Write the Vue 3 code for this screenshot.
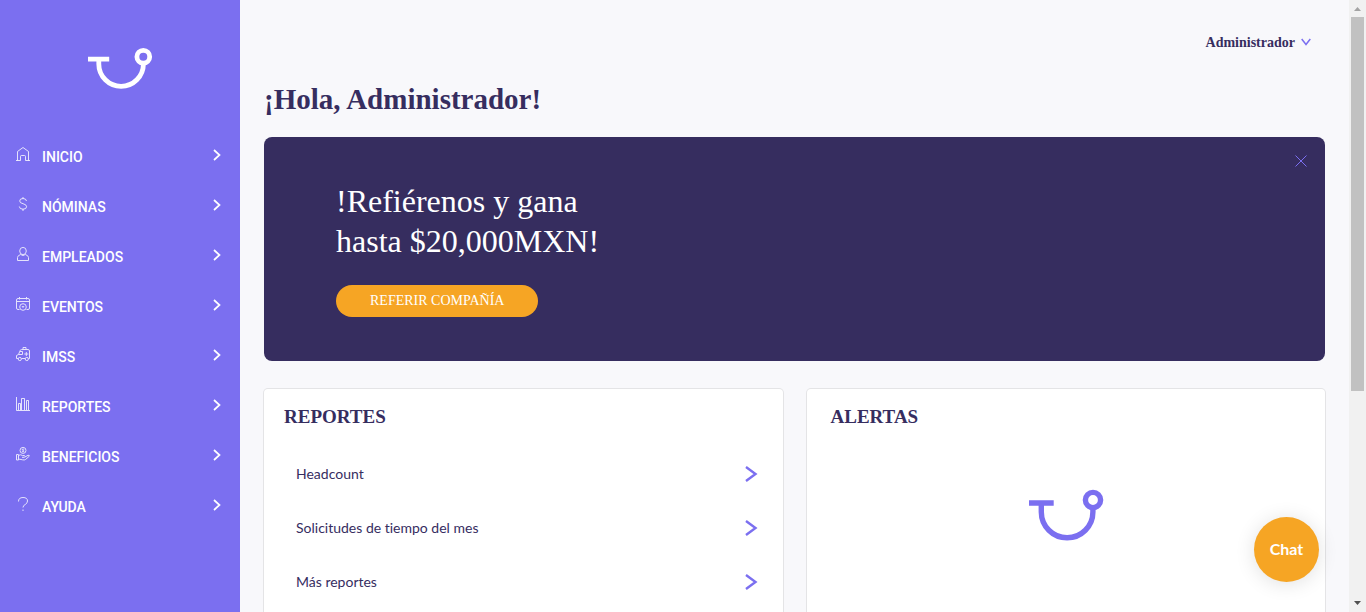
<script setup>
import { ref } from 'vue'

const menu = [
  { id: 'inicio', label: 'INICIO' },
  { id: 'nominas', label: 'NÓMINAS' },
  { id: 'empleados', label: 'EMPLEADOS' },
  { id: 'eventos', label: 'EVENTOS' },
  { id: 'imss', label: 'IMSS' },
  { id: 'reportes', label: 'REPORTES' },
  { id: 'beneficios', label: 'BENEFICIOS' },
  { id: 'ayuda', label: 'AYUDA' },
]

const reports = ['Headcount', 'Solicitudes de tiempo del mes', 'Más reportes']

const bannerOpen = ref(true)
</script>

<template>
  <div class="app">
    <nav class="sidebar" aria-label="Principal">
      <svg class="brand" viewBox="0 0 64 41" aria-hidden="true">
        <path d="M0 11.1H21.2M10.8 11V16A22.3 22.3 0 0 0 55.4 16V15" />
        <circle cx="55.3" cy="8.8" r="6.4" />
      </svg>
      <ul class="menu">
        <li v-for="item in menu" :key="item.id">
          <a class="menu-item" href="#">
            <svg class="menu-icon" viewBox="0 0 14 14" aria-hidden="true">
              <path v-if="item.id === 'inicio'" d="M0 13.5H4.5V9.5Q4.500 8.500 5.500 8.500H8.500Q9.500 8.500 9.500 9.500V13.500H14M1.500 13.500V4.500L7 .5L12.500 4.500V13.500" />
              <path v-else-if="item.id === 'nominas'" d="M7 0V1.500M7 12V14M10.500 4Q10.200 1.500 7 1.500Q3.700 1.500 3.700 4Q3.700 6 7 6.700Q10.600 7.500 10.600 9.700Q10.600 12.200 7 12.200Q3.500 12.200 3.300 9.500" />
              <template v-else-if="item.id === 'empleados'">
                <ellipse cx="7" cy="4" rx="3.3" ry="3.6" />
                <path d="M4.700 7.500Q1.500 8.500 1.500 10.500V13.500H12.500V10.500Q12.500 8.500 9.300 7.500Q7 9.600 4.700 7.500" />
              </template>
              <template v-else-if="item.id === 'eventos'">
                <path d="M3.500 12.500H2Q.5 12.500 .5 11V3Q.5 1.500 2 1.500H12Q13.500 1.500 13.500 3V11Q13.500 12.500 12 12.500H10.500M.5 4.500H13.500M3.500 0V2.500M10.500 0V2.500M6 9L7 10.500L8 9" />
                <circle cx="7" cy="10" r="3.3" />
              </template>
              <template v-else-if="item.id === 'imss'">
                <path d="M2 11.500H.5V8.500L2.500 7.500L4.200 3.500Q4.500 2.500 5.500 2.500H12Q13.500 2.500 13.500 4V11.500H12.500M5.500 11.500H9M2.500 7.500H6.500V4.500H4M7 2.500V.5H10V2.500M10.300 5V9M8.300 7H12.300" />
                <circle cx="3.800" cy="12" r="1.600" />
                <circle cx="10.800" cy="12" r="1.600" />
              </template>
              <path v-else-if="item.id === 'reportes'" d="M.5 0V13.500H14M2.500 13V6.500H4.500V13M5.500 13V1.500H8.500V13M10.500 13V3.500H12.500V13" />
              <template v-else-if="item.id === 'beneficios'">
                <circle cx="7" cy="3.400" r="3" />
                <path d="M8.200 2.500Q7 1.500 6.200 2.400Q6 3.200 7 3.400Q8.200 3.700 7.800 4.500Q7 5.200 5.900 4.300M.5 7.500H2.500V13H.5ZM2.500 8.500Q4.500 7 6.500 8.500H8.500Q9.700 9.300 8.500 10.300H6M9 10L12 8.300Q13.700 8 13.300 9.200L9.500 12.500Q8.500 13.300 6.500 12.800L2.500 12" />
              </template>
              <path v-else d="M2.500 4.500Q2.500 .5 7 .5Q11.500 .5 11.500 4Q11.500 6 9.500 7.300Q7 8.500 7 10.500M7 12.500V14" />
            </svg>
            <span class="menu-label">{{ item.label }}</span>
            <svg class="menu-arrow" viewBox="0 0 8 12" aria-hidden="true">
              <path d="M1 1L6.500 6L1 11" />
            </svg>
          </a>
        </li>
      </ul>
    </nav>

    <main class="content">
      <header class="topbar">
        <button class="account" type="button">
          Administrador
          <svg class="account-arrow" viewBox="0 0 10 8" aria-hidden="true">
            <path d="M.7 1L5 6.500L9.300 1" />
          </svg>
        </button>
      </header>

      <h1>¡Hola, Administrador!</h1>

      <section v-if="bannerOpen" class="banner">
        <p class="banner-text">!Refiérenos y gana<br />hasta $20,000MXN!</p>
        <button class="refer" type="button">REFERIR COMPAÑÍA</button>
        <button class="close" type="button" aria-label="Cerrar" @click="bannerOpen = false">
          <svg viewBox="0 0 12 12" aria-hidden="true"><path d="M.5 .5L11.500 11.500M11.500 .5L.5 11.500" /></svg>
        </button>
      </section>

      <div class="cards">
        <section class="card reports">
          <h2>REPORTES</h2>
          <ul>
            <li v-for="report in reports" :key="report">
              <a class="report" href="#">
                <span>{{ report }}</span>
                <svg class="report-arrow" viewBox="0 0 12 16" aria-hidden="true">
                  <path d="M1 1L10.500 8L1 15" />
                </svg>
              </a>
            </li>
          </ul>
        </section>
        <section class="card alerts">
          <h2>ALERTAS</h2>
          <svg class="alerts-logo" viewBox="0 0 74 52" aria-hidden="true">
            <path d="M0 14H24.700M12.300 14V23A25.800 25.800 0 0 0 63.900 23V19" />
            <circle cx="64" cy="11" r="7.600" />
          </svg>
        </section>
      </div>

      <button class="chat" type="button">Chat</button>
    </main>

    <div class="scrollbar" aria-hidden="true">
      <svg class="scroll-arrow up" viewBox="0 0 17 17"><path d="M5 11L8.500 7L12 11Z" /></svg>
      <div class="track"><div class="thumb"></div></div>
      <svg class="scroll-arrow down" viewBox="0 0 17 17"><path d="M5 6L8.500 10L12 6Z" /></svg>
    </div>
  </div>
</template>

<style>
body {
  margin: 0;
}
</style>

<style scoped>
.app {
  display: flex;
  height: 100vh;
  overflow: hidden;
  background: #f8f8fb;
  color: #362d5f;
  font-family: Lato, 'Liberation Sans', sans-serif;
  font-variant-ligatures: none;
}

button {
  margin: 0;
  padding: 0;
  border: 0;
  background: none;
  color: inherit;
  cursor: pointer;
}

a {
  color: inherit;
  text-decoration: none;
}

ul {
  margin: 0;
  padding: 0;
  list-style: none;
}

svg {
  display: block;
  flex: none;
  fill: none;
  overflow: visible;
}

.sidebar {
  flex: 0 0 240px;
  background: #7b6ff0;
  color: #fff;
}

.brand {
  width: 64px;
  margin: 48px auto 41px;
  stroke: #fff;
  stroke-width: 4.8;
}

.menu-item {
  display: flex;
  align-items: center;
  height: 50px;
  padding: 0 19px 0 16px;
}

.menu-icon {
  width: 14px;
  height: 14px;
  margin-bottom: 2px;
  stroke: #fff;
  stroke-width: 1;
  opacity: 0.8;
}

.menu-label {
  flex: 1;
  padding: 4px 0 0 12px;
  font-family: Roboto, sans-serif;
  font-size: 14px;
  line-height: 20px;
  font-weight: 500;
}

.menu-arrow {
  width: 8px;
  height: 12px;
  stroke: #fff;
  stroke-width: 1.7;
}

.content {
  position: relative;
  flex: 1;
  min-width: 0;
  padding: 0 24px;
}

.topbar {
  display: flex;
  justify-content: flex-end;
  align-items: center;
  height: 84px;
  padding-right: 14px;
}

.account {
  display: flex;
  align-items: center;
  gap: 6px;
  padding-top: 1px;
  font: bold 14px/20px 'Liberation Serif', serif;
}

.account-arrow {
  width: 10px;
  height: 8px;
  margin-bottom: 2px;
  stroke: #7b6ff0;
  stroke-width: 1.5;
}

h1 {
  margin: 0 0 23px;
  font: bold 29px/30px 'Liberation Serif', serif;
}

.banner {
  position: relative;
  padding: 44px 72px;
  border-radius: 8px;
  background: #362d5f;
  color: #fff;
}

.banner-text {
  margin: 0 0 24px;
  font: 32px/40px 'Liberation Serif', serif;
}

.refer {
  display: block;
  padding: 0 34px;
  border-radius: 16px;
  background: #f6a524;
  color: #fff;
  font: 14px/32px 'Liberation Serif', serif;
}

.close {
  position: absolute;
  top: 18px;
  right: 18px;
}

.close svg {
  width: 12px;
  height: 12px;
  stroke: #7b6ff0;
}

.cards {
  display: grid;
  grid-template-columns: 1fr 1fr;
  gap: 24px;
  margin-top: 28px;
}

.card {
  min-height: 320px;
  padding: 16px 24px;
  border-radius: 4px;
  background: #fff;
  box-shadow: 0 0 0 1px #e4e4e6;
}

.reports {
  padding-left: 20px;
}

h2 {
  margin: 0;
  font: bold 19px/24px 'Liberation Serif', serif;
}

.reports ul {
  margin-top: 18px;
}

.report {
  display: flex;
  align-items: center;
  justify-content: space-between;
  height: 54px;
  padding-left: 12px;
  font-size: 14px;
  line-height: 18px;
}

.report-arrow {
  width: 12px;
  height: 16px;
  margin-right: 2px;
  stroke: #7b6ff0;
  stroke-width: 2.4;
}

.alerts-logo {
  width: 74px;
  height: 52px;
  margin: 60px auto 0;
  stroke: #7b6ff0;
  stroke-width: 5.4;
}

.chat {
  position: absolute;
  right: 30px;
  bottom: 30px;
  width: 65px;
  height: 65px;
  padding-bottom: 2px;
  border-radius: 50%;
  background: #f6a524;
  box-shadow: 0 2px 20px rgba(0, 0, 0, 0.12);
  color: #fff;
  font: bold 16px/20px Lato, sans-serif;
}

.scrollbar {
  display: flex;
  flex-direction: column;
  flex: 0 0 17px;
  background: #f1f1f1;
}

.track {
  flex: 1;
  padding: 0 2px;
}

.thumb {
  height: 64.7%;
  background: #c1c1c1;
}

.scroll-arrow {
  width: 17px;
  height: 17px;
  fill: #a3a3a3;
}

.down {
  fill: #505050;
}
</style>
